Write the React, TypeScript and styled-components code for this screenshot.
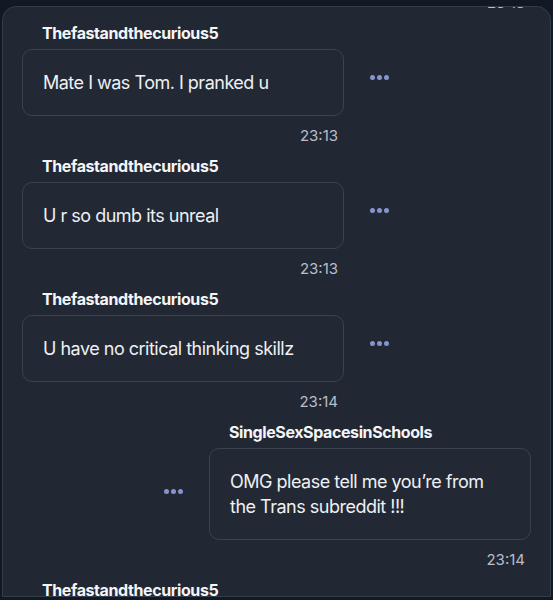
import styled, { createGlobalStyle } from "styled-components";

const GlobalStyle = createGlobalStyle`
  html, body {
    margin: 0;
    padding: 0;
    background: #121824;
  }
  body {
    font-family: "Inter", "Liberation Sans", sans-serif;
    -webkit-font-smoothing: antialiased;
  }
`;

const Panel = styled.main`
  box-sizing: border-box;
  height: 591px;
  margin: 6px 2px 0;
  padding: 0 19px;
  background: #212834;
  border: 1px solid #343b49;
  border-radius: 14px 14px 0 0;
  overflow: hidden;
`;

const Thread = styled.div`
  display: flex;
  flex-direction: column;
  gap: 10px;
  margin-top: -14.5px;
`;

const Group = styled.section<{ $mine?: boolean }>`
  display: flex;
  flex-direction: column;
  align-items: ${(p) => (p.$mine ? "flex-end" : "flex-start")};
`;

const Username = styled.div`
  box-sizing: border-box;
  width: 322px;
  padding-left: 20px;
  margin-bottom: 6px;
  font-size: 16px;
  line-height: 20px;
  font-weight: 700;
  letter-spacing: -0.4px;
  color: #f4f5f7;
`;

const Row = styled.div<{ $mine?: boolean }>`
  display: flex;
  flex-direction: ${(p) => (p.$mine ? "row-reverse" : "row")};
  align-items: center;
  gap: 26px;
`;

const Bubble = styled.div`
  box-sizing: border-box;
  width: 322px;
  padding: 20px;
  border: 1px solid #3a4250;
  border-radius: 10px;
  background: #222935;
  font-size: 18px;
  line-height: 25px;
  letter-spacing: -0.5px;
  color: #eef0f3;
`;

const Dots = styled.div<{ $mine?: boolean }>`
  display: flex;
  gap: 2px;
  transform: translateY(${(p) => (p.$mine ? "-2px" : "-5px")});

  span {
    width: 5px;
    height: 5px;
    border-radius: 50%;
    background: #8794cc;
  }
`;

const Timestamp = styled.div`
  box-sizing: border-box;
  width: 322px;
  padding-right: 6px;
  margin-top: 10px;
  text-align: right;
  font-size: 15px;
  line-height: 20px;
  color: #b9bec7;
`;

const Earlier = styled(Timestamp)`
  align-self: flex-end;
  margin-top: 0;
`;

type Message = {
  user: string;
  text: string;
  time: string;
  mine?: boolean;
};

const messages: Message[] = [
  { user: "Thefastandthecurious5", text: "Mate I was Tom. I pranked u", time: "23:13" },
  { user: "Thefastandthecurious5", text: "U r so dumb its unreal", time: "23:13" },
  { user: "Thefastandthecurious5", text: "U have no critical thinking skillz", time: "23:14" },
  {
    user: "SingleSexSpacesinSchools",
    text: "OMG please tell me you’re from the Trans subreddit !!!",
    time: "23:14",
    mine: true,
  },
  { user: "Thefastandthecurious5", text: "Are you a teacher or what", time: "23:15" },
];

export default function App() {
  return (
    <>
      <GlobalStyle />
      <Panel>
        <Thread>
          <Earlier>23:13</Earlier>
          {messages.map((m, i) => (
            <Group key={i} $mine={m.mine}>
              <Username>{m.user}</Username>
              <Row $mine={m.mine}>
                <Bubble>{m.text}</Bubble>
                <Dots $mine={m.mine}>
                  <span />
                  <span />
                  <span />
                </Dots>
              </Row>
              <Timestamp>{m.time}</Timestamp>
            </Group>
          ))}
        </Thread>
      </Panel>
    </>
  );
}
